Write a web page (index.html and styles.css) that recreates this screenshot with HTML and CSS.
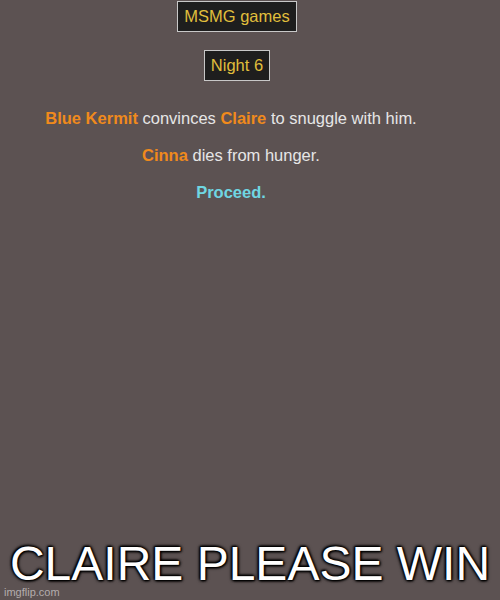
FILE: index.html
```html
<!DOCTYPE html>
<html lang="en">
<head>
  <meta charset="UTF-8">
  <title>MSMG games - Night 6</title>
  <link rel="stylesheet" href="styles.css">
</head>
<body>
  <div class="screen">
    <div class="story">
      <div class="title-box">MSMG games</div>
      <div class="night-box">Night 6</div>

      <p class="event first"><span class="name">Blue Kermit</span> convinces <span class="name">Claire</span> to snuggle with him.</p>
      <p class="event"><span class="name">Cinna</span> dies from hunger.</p>
      <p class="proceed">Proceed.</p>
    </div>

    <div class="caption">CLAIRE PLEASE WIN</div>
    <div class="watermark">imgflip.com</div>
  </div>
</body>
</html>
```

FILE: styles.css
```css
body {
  margin: 0;
  background-color: #5c5252;
  font-family: 'Liberation Sans', Arial, sans-serif;
}
.screen {
  position: relative;
  width: 500px;
  height: 600px;
  display: flex;
  flex-direction: column;
  align-items: center;
}
.story {
  box-sizing: border-box;
  width: 100%;
  padding-right: 26px;
  display: flex;
  flex-direction: column;
  align-items: center;
}
.title-box, .night-box {
  background-color: #1e1e1e;
  border: 1px solid #c8c8c8;
  color: #e0bf3c;
  font-size: 16.5px;
  padding: 5px 6px;
  line-height: 19px;
}
.title-box {
  margin-top: 1px;
}
.night-box {
  margin-top: 18px;
}
.event, .proceed {
  margin: 18px 12px 0 0;
  font-size: 16.5px;
  line-height: 19px;
  color: #e6e6e6;
}
.event.first {
  margin-top: 28px;
}
.name {
  color: #f08a1c;
  font-weight: bold;
}
.proceed {
  color: #6fd6e2;
  font-weight: bold;
}
.caption {
  margin-top: auto;
  margin-bottom: 15px;
  color: #fff;
  font-size: 48px;
  line-height: 42px;
  text-shadow: 0 0 3px #000, 0 0 3px #000, 0 0 4px #000, 1px 1px 2px #000, -1px -1px 2px #000;
}
.watermark {
  position: absolute;
  left: 4px;
  bottom: 2px;
  color: #b4adad;
  font-size: 11px;
}
```
